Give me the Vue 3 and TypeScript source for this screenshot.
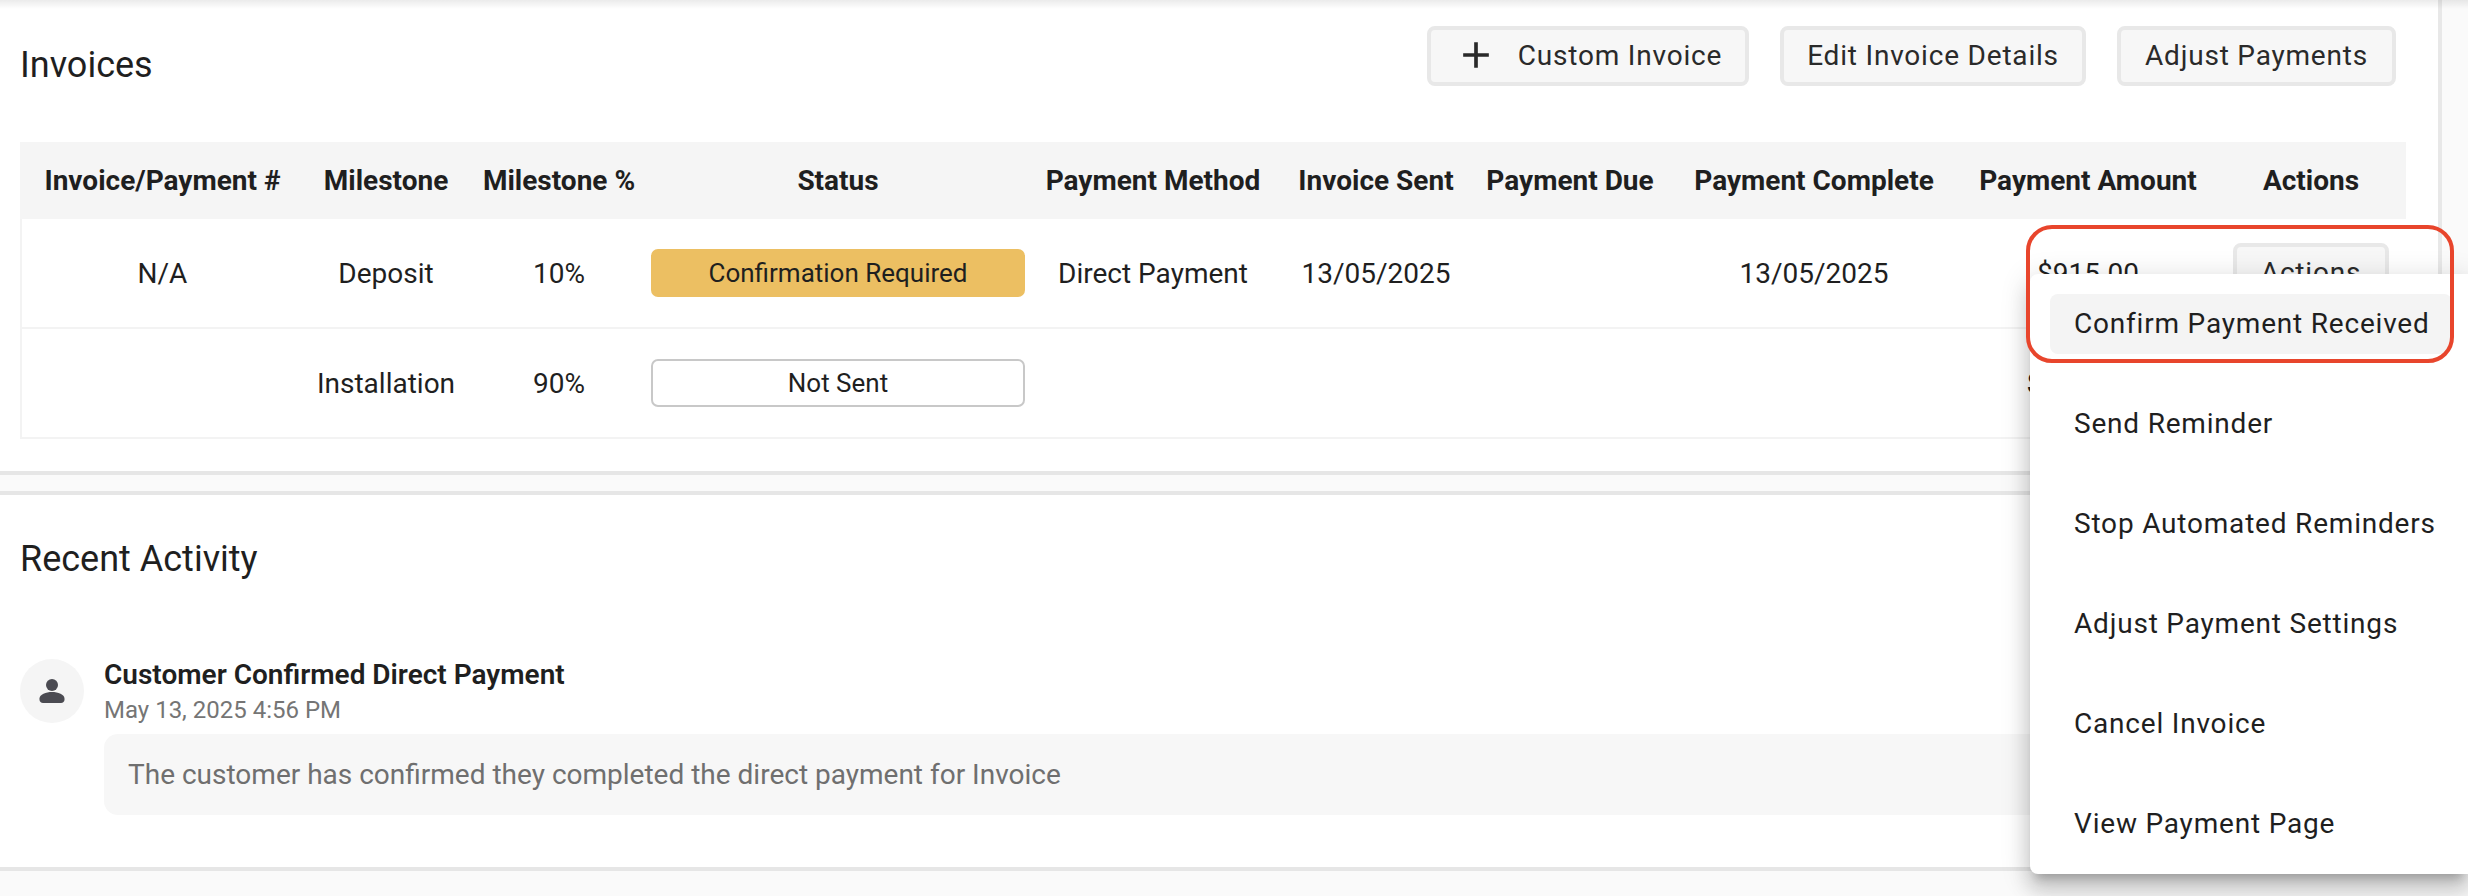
<script setup lang="ts">
interface Row {
  invoice: string
  milestone: string
  percent: string
  status: string
  statusKind: string
  method: string
  sent: string
  due: string
  complete: string
  amount: string
  hasAction: boolean
}

const headers: string[] = [
  'Invoice/Payment #',
  'Milestone',
  'Milestone %',
  'Status',
  'Payment Method',
  'Invoice Sent',
  'Payment Due',
  'Payment Complete',
  'Payment Amount',
  'Actions',
]

const rows: Row[] = [
  {
    invoice: 'N/A',
    milestone: 'Deposit',
    percent: '10%',
    status: 'Confirmation Required',
    statusKind: 'warn',
    method: 'Direct Payment',
    sent: '13/05/2025',
    due: '',
    complete: '13/05/2025',
    amount: '$915.00',
    hasAction: true,
  },
  {
    invoice: '',
    milestone: 'Installation',
    percent: '90%',
    status: 'Not Sent',
    statusKind: 'idle',
    method: '',
    sent: '',
    due: '',
    complete: '',
    amount: '$8,235.00',
    hasAction: false,
  },
]

const menuItems: string[] = [
  'Confirm Payment Received',
  'Send Reminder',
  'Stop Automated Reminders',
  'Adjust Payment Settings',
  'Cancel Invoice',
  'View Payment Page',
]
</script>

<template>
  <div class="page">
    <section class="panel invoices">
      <div class="panel-head">
        <h2 class="title">Invoices</h2>
        <div class="buttons">
          <button class="btn btn-custom">
            <svg class="plus" viewBox="0 0 24 24" aria-hidden="true">
              <path d="M19 13h-6v6h-2v-6H5v-2h6V5h2v6h6v2z" />
            </svg>
            <span>Custom Invoice</span>
          </button>
          <button class="btn btn-edit">Edit Invoice Details</button>
          <button class="btn btn-adjust">Adjust Payments</button>
        </div>
      </div>
      <div class="table">
        <div class="tr th-row">
          <div v-for="h in headers" :key="h" class="th">{{ h }}</div>
        </div>
        <div v-for="(r, i) in rows" :key="i" class="tr body-row">
          <div class="td">{{ r.invoice }}</div>
          <div class="td">{{ r.milestone }}</div>
          <div class="td">{{ r.percent }}</div>
          <div class="td">
            <div class="badge" :class="r.statusKind">{{ r.status }}</div>
          </div>
          <div class="td">{{ r.method }}</div>
          <div class="td">{{ r.sent }}</div>
          <div class="td">{{ r.due }}</div>
          <div class="td">{{ r.complete }}</div>
          <div class="td">{{ r.amount }}</div>
          <div class="td">
            <button v-if="r.hasAction" class="btn btn-actions">Actions</button>
          </div>
        </div>
      </div>
    </section>

    <section class="panel activity">
      <h2 class="title activity-title">Recent Activity</h2>
      <div class="entry">
        <div class="avatar">
          <svg class="person" viewBox="0 0 26 24" aria-hidden="true">
            <circle cx="13" cy="6" r="6" />
            <path d="M13 13c-6 0-12.5 2.5-12.5 6.5v1C.5 22.5 2 24 4 24h18c2 0 3.5-1.5 3.5-3.5v-1C25.5 15.5 19 13 13 13z" />
          </svg>
        </div>
        <div class="entry-body">
          <div class="entry-title">Customer Confirmed Direct Payment</div>
          <div class="entry-date">May 13, 2025 4:56 PM</div>
          <div class="entry-msg">The customer has confirmed they completed the direct payment for Invoice</div>
        </div>
      </div>
    </section>

    <div class="menu">
      <div v-for="(m, i) in menuItems" :key="m" class="menu-item" :class="{ active: i === 0 }">{{ m }}</div>
    </div>
    <div class="callout"></div>
  </div>
</template>

<style>
html,
body {
  margin: 0;
  background: #fafafa;
}
</style>

<style scoped>
.page {
  position: relative;
  width: 2468px;
  height: 896px;
  overflow: hidden;
  background: #fafafa;
  font-family: Roboto, "Liberation Sans", sans-serif;
  color: #1f1f1f;
}

.page::before {
  content: "";
  position: absolute;
  left: 0;
  right: 0;
  top: 0;
  height: 9px;
  background: linear-gradient(to bottom, rgba(0, 0, 0, 0.08), rgba(0, 0, 0, 0));
  z-index: 1;
}

.panel {
  box-sizing: border-box;
  width: 2442px;
  background: #fff;
  border-right: 4px solid #e8e8e8;
}

.invoices {
  height: 475px;
  border-bottom: 4px solid #e6e6e6;
  padding: 26px 32px 0 20px;
}

.panel-head {
  display: flex;
  justify-content: space-between;
  align-items: flex-start;
  height: 60px;
  padding-right: 10px;
  margin-bottom: 56px;
}

.title {
  margin: 0;
  font-size: 36px;
  font-weight: 400;
  line-height: 1.2;
  color: #1f1f1f;
}

.panel-head .title {
  margin-top: 18px;
}

.buttons {
  display: flex;
  gap: 31px;
}

.btn {
  box-sizing: border-box;
  height: 60px;
  background: #f7f7f7;
  border: 4px solid #e8e8e8;
  border-radius: 8px;
  font-family: inherit;
  font-size: 28px;
  letter-spacing: 0.8px;
  color: #2a2a2a;
  padding: 0 0 2px;
  display: flex;
  align-items: center;
  justify-content: center;
}

.btn-custom {
  width: 322px;
  gap: 20px;
}

.btn-edit {
  width: 306px;
}

.btn-adjust {
  width: 279px;
}

.plus {
  width: 44px;
  height: 44px;
  fill: #2a2a2a;
}

.table {
  width: 2386px;
}

.tr {
  display: grid;
  grid-template-columns: 285px 162px 184px 374px 256px 190px 198px 290px 258px 188px;
}

.th-row {
  height: 77px;
  background: #f5f5f5;
}

.th {
  display: flex;
  align-items: center;
  justify-content: center;
  font-size: 28px;
  font-weight: 700;
  color: #1f1f1f;
  white-space: nowrap;
}

.body-row {
  box-sizing: border-box;
  height: 110px;
  border-bottom: 2px solid #f3f3f3;
  box-shadow: inset 2px 0 0 #f3f3f3;
}

.td {
  display: flex;
  align-items: center;
  justify-content: center;
  font-size: 28px;
  color: #1f1f1f;
  white-space: nowrap;
}

.badge {
  box-sizing: border-box;
  width: 374px;
  height: 48px;
  border-radius: 7px;
  display: flex;
  align-items: center;
  justify-content: center;
  font-size: 26px;
}

.badge.warn {
  background: #ecbf62;
}

.badge.idle {
  background: #fff;
  border: 2px solid #c8c8c8;
}

.btn-actions {
  width: 156px;
}

.activity {
  height: 380px;
  margin-top: 16px;
  border-top: 4px solid #e6e6e6;
  border-bottom: 4px solid #e6e6e6;
  padding: 43px 20px 0;
}

.activity-title {
  margin-bottom: 78px;
}

.entry {
  display: flex;
  gap: 20px;
}

.avatar {
  width: 64px;
  height: 64px;
  border-radius: 50%;
  background: #f5f5f5;
  display: flex;
  align-items: center;
  justify-content: center;
  flex: none;
}

.person {
  width: 26px;
  height: 24px;
  fill: #4b4b52;
}

.entry-body {
  flex: 1;
}

.entry-title {
  font-size: 28px;
  font-weight: 600;
  line-height: 32px;
  color: #1f1f1f;
}

.entry-date {
  font-size: 24px;
  line-height: 28px;
  margin-top: 5px;
  color: #757575;
}

.entry-msg {
  box-sizing: border-box;
  height: 81px;
  margin-top: 10px;
  padding: 0 24px;
  display: flex;
  align-items: center;
  background: #f7f7f7;
  border-radius: 14px;
  font-size: 28px;
  color: #6f6f6f;
}

.menu {
  position: absolute;
  left: 2030px;
  top: 274px;
  right: 0;
  height: 600px;
  box-sizing: border-box;
  padding: 20px 16px 0 20px;
  background: #fff;
  border-radius: 8px 0 0 8px;
  box-shadow: 0 10px 10px -6px rgba(0, 0, 0, 0.2), 0 16px 20px 2px rgba(0, 0, 0, 0.14), 0 6px 28px 4px rgba(0, 0, 0, 0.12);
  z-index: 2;
}

.menu-item {
  box-sizing: border-box;
  height: 60px;
  margin-bottom: 40px;
  padding: 0 0 2px 24px;
  display: flex;
  align-items: center;
  font-size: 28px;
  letter-spacing: 0.8px;
  color: #1f1f1f;
  border-radius: 8px;
  white-space: nowrap;
}

.menu-item.active {
  background: #f4f4f4;
}

.callout {
  position: absolute;
  left: 2026px;
  top: 225px;
  width: 428px;
  height: 138px;
  box-sizing: border-box;
  border: 4px solid #e8452c;
  border-radius: 26px;
  pointer-events: none;
  z-index: 3;
}
</style>
